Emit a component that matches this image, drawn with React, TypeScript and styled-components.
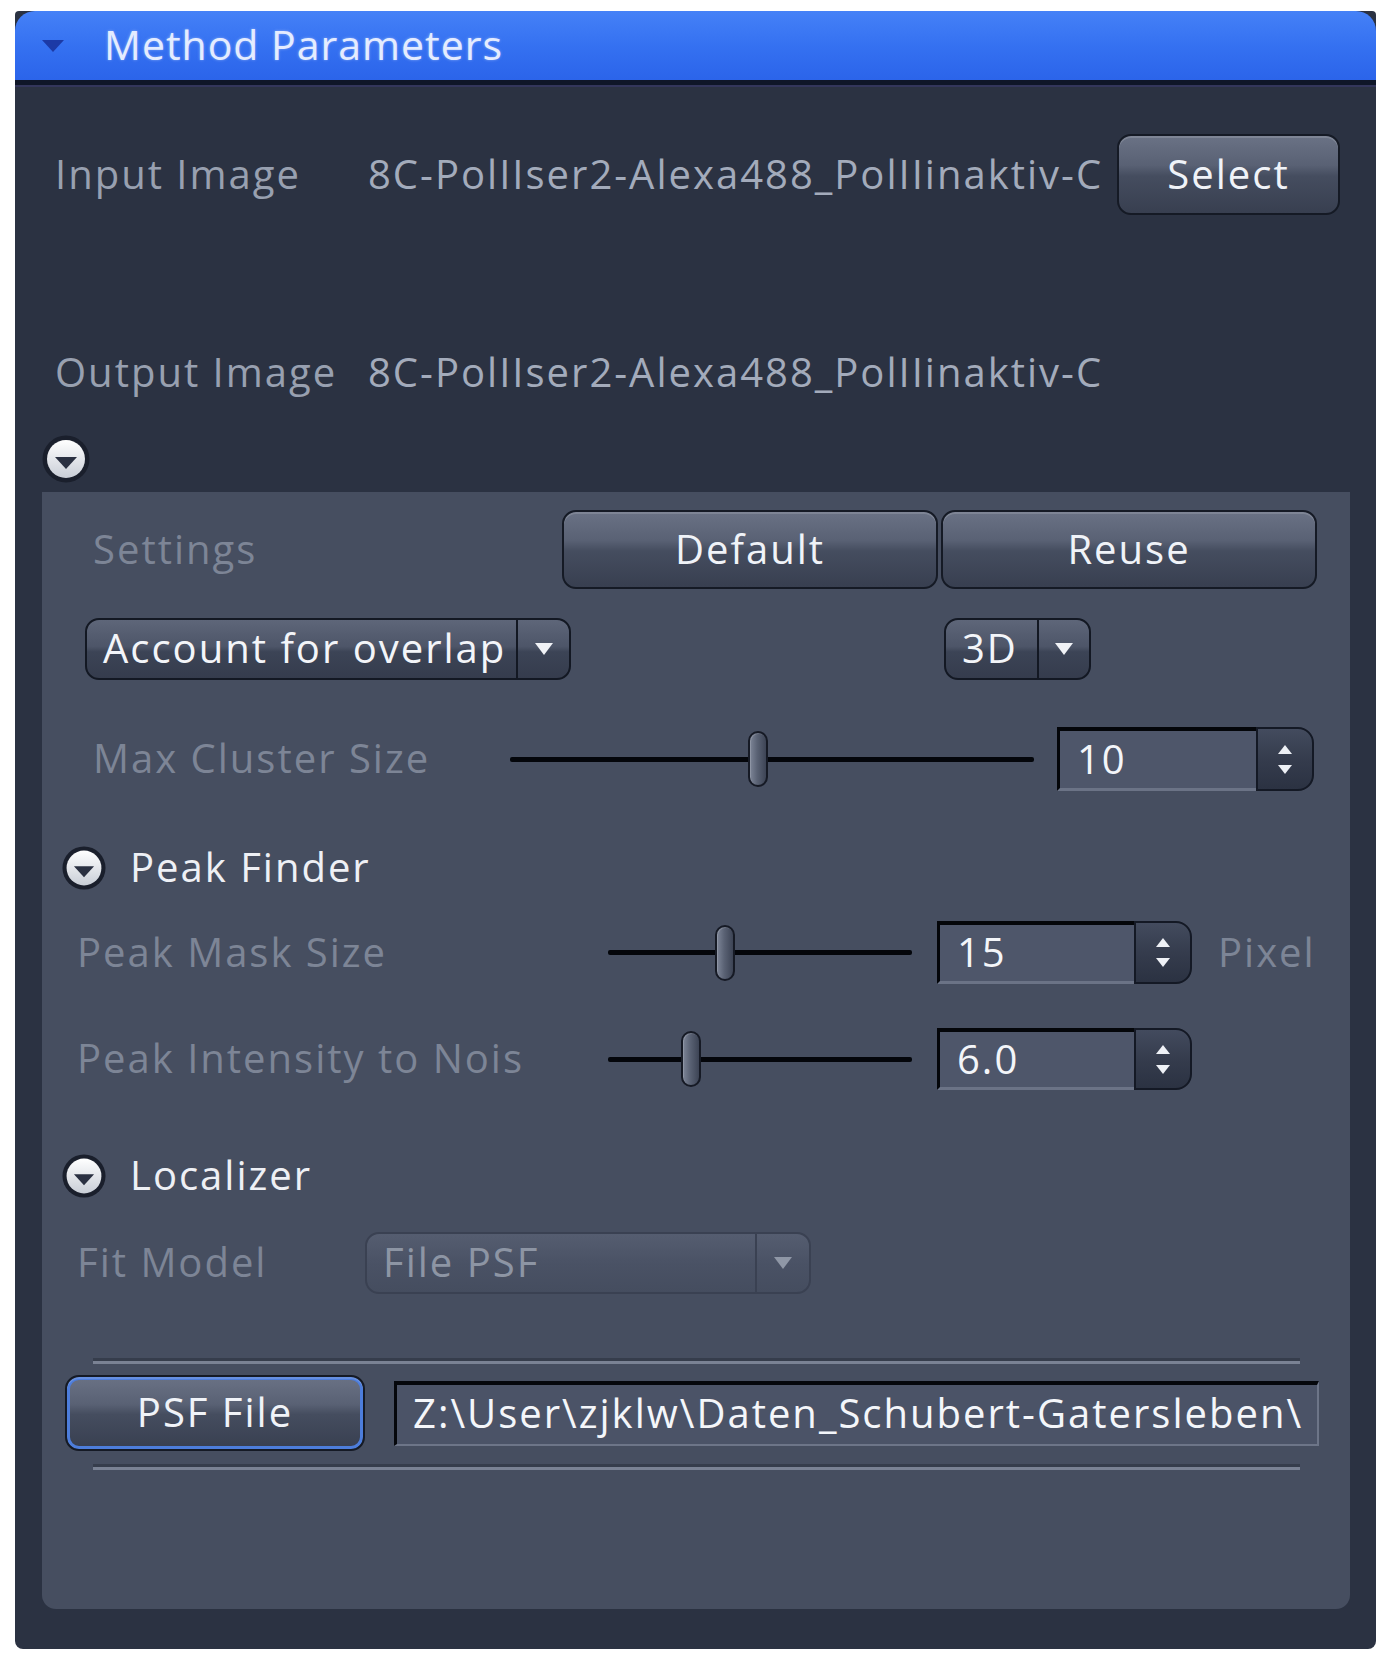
import React from "react";
import styled, { createGlobalStyle, css } from "styled-components";

const GlobalStyle = createGlobalStyle`
  html, body { margin: 0; padding: 0; background: #ffffff; }
  body { font-family: "Open Sans", "Liberation Sans", sans-serif; }
  * { box-sizing: border-box; }
`;

const uiText = css`
  font-size: 40px;
  font-weight: 500;
  letter-spacing: 2px;
  line-height: 1.35;
  padding-bottom: 2px;
  white-space: nowrap;
`;

const Page = styled.div`
  padding: 11px 0 8px 15px;
`;

const Panel = styled.section`
  width: 1361px;
  height: 1638px;
  background: #2b3242;
  display: flex;
  flex-direction: column;
  border-radius: 4px 4px 8px 8px;
  overflow: hidden;
`;

const Header = styled.header`
  flex: none;
  height: 74px;
  display: flex;
  align-items: center;
  padding-left: 27px;
  background: linear-gradient(180deg, #4581f7 0%, #3571f1 50%, #2b64ea 100%);
  border-radius: 20px 20px 0 0;
  border-bottom: 5px solid #0f1628;
  box-shadow: 0 2px 0 #33365b;
`;

const HeaderTitle = styled.h1`
  margin: 0 0 0 40px;
  padding-bottom: 2px;
  font-size: 41px;
  font-weight: 500;
  letter-spacing: 1px;
  line-height: 1.3;
  color: #e4ecff;
  text-shadow: 0 0 3px rgba(210, 225, 255, 0.5);
`;

const Row = styled.div<{ $mt: number; $h: number; $pl?: number; $pr?: number }>`
  flex: none;
  display: flex;
  align-items: center;
  margin-top: ${(p) => p.$mt}px;
  height: ${(p) => p.$h}px;
  padding-left: ${(p) => p.$pl ?? 0}px;
  padding-right: ${(p) => p.$pr ?? 0}px;
`;

const Label = styled.span<{ $w?: number; $tone?: "top" | "dim" | "value" }>`
  ${uiText};
  flex: none;
  width: ${(p) => (p.$w ? `${p.$w}px` : "auto")};
  overflow: ${(p) => (p.$tone === "value" ? "hidden" : "visible")};
  color: ${(p) =>
    p.$tone === "dim" ? "#7d8596" : p.$tone === "value" ? "#a3abbb" : "#98a0b0"};
`;

const GlossButton = styled.button<{ $w: number; $h: number; $focus?: boolean }>`
  ${uiText};
  flex: none;
  width: ${(p) => p.$w}px;
  height: ${(p) => p.$h}px;
  padding-top: 0;
  padding-left: 0;
  padding-right: 0;
  border: 2px solid #151a25;
  border-radius: 14px;
  background: linear-gradient(
    180deg,
    #6a7285 0%,
    #596174 38%,
    #454d5f 52%,
    #383f50 100%
  );
  box-shadow: inset 0 2px 0 rgba(255, 255, 255, 0.14)
    ${(p) => (p.$focus ? ", inset 0 0 0 3px #4d7ddb" : "")};
  color: #f0f3f8;
  font-family: inherit;
  display: flex;
  align-items: center;
  justify-content: center;
`;

const ToggleSpot = styled.div<{ $mt: number; $ml: number }>`
  flex: none;
  display: flex;
  margin-top: ${(p) => p.$mt}px;
  margin-left: ${(p) => p.$ml}px;
`;

const InnerPanel = styled.div`
  flex: 1;
  margin: 9px 26px 40px 27px;
  background: #464e60;
  border-radius: 0 0 14px 14px;
  display: flex;
  flex-direction: column;
`;

const Combo = styled.div<{ $w: number; $disabled?: boolean }>`
  flex: none;
  width: ${(p) => p.$w}px;
  height: 62px;
  display: flex;
  border: 2px solid ${(p) => (p.$disabled ? "#3a4152" : "#131823")};
  border-radius: 14px;
  overflow: hidden;
  background: ${(p) =>
    p.$disabled
      ? "linear-gradient(180deg, #555d70 0%, #4a5265 50%, #454d5f 100%)"
      : "linear-gradient(180deg, #5e6679 0%, #4d5568 46%, #3c4456 55%, #353c4d 100%)"};
`;

const ComboText = styled.span<{ $disabled?: boolean }>`
  ${uiText};
  flex: 1;
  display: flex;
  align-items: center;
  padding-left: 16px;
  color: ${(p) => (p.$disabled ? "#8d95a4" : "#f3f5f9")};
`;

const ComboArrow = styled.span<{ $w: number; $disabled?: boolean }>`
  flex: none;
  width: ${(p) => p.$w}px;
  display: flex;
  align-items: center;
  justify-content: center;
  border-left: 2px solid ${(p) => (p.$disabled ? "#3a4152" : "#131823")};
`;

const SliderTrack = styled.div<{ $w: number }>`
  flex: none;
  position: relative;
  width: ${(p) => p.$w}px;
  height: 5px;
  background: #04060b;
  border-radius: 2px;
`;

const SliderThumb = styled.div`
  position: absolute;
  top: 50%;
  width: 20px;
  height: 56px;
  transform: translate(-50%, -50%);
  border-radius: 10px;
  border: 2px solid #161a25;
  background: linear-gradient(90deg, #7d8597 0%, #5a6274 45%, #3d4455 100%);
  box-shadow: inset 1px 1px 0 rgba(255, 255, 255, 0.15);
`;

const Spin = styled.div<{ $w: number; $h: number; $ml: number }>`
  flex: none;
  display: flex;
  width: ${(p) => p.$w}px;
  height: ${(p) => p.$h}px;
  margin-left: ${(p) => p.$ml}px;
`;

const SpinField = styled.div`
  ${uiText};
  flex: 1;
  display: flex;
  align-items: center;
  padding-left: 17px;
  background: #4e566a;
  border-top: 4px solid #04060a;
  border-left: 3px solid #04060a;
  border-bottom: 3px solid #6b7386;
  color: #f3f5f9;
`;

const SpinButtons = styled.div`
  flex: none;
  width: 58px;
  display: flex;
  flex-direction: column;
  align-items: center;
  justify-content: center;
  gap: 11px;
  background: linear-gradient(180deg, #434b5e 0%, #353c4d 50%, #2b3242 100%);
  border: 2px solid #141925;
  border-radius: 0 16px 16px 0;
`;

const Unit = styled.span`
  ${uiText};
  margin-left: 26px;
  color: #7d8596;
`;

const SectionTitle = styled.span`
  ${uiText};
  margin-left: 24px;
  color: #eef0f5;
`;

const Separator = styled.div<{ $mt: number }>`
  flex: none;
  margin: ${(p) => p.$mt}px 50px 0 51px;
  height: 3px;
  background: #7a8294;
  box-shadow: 0 -3px 0 #363d4c;
`;

const PathField = styled.div`
  ${uiText};
  flex: none;
  width: 925px;
  height: 65px;
  margin-left: 29px;
  display: flex;
  align-items: center;
  padding-left: 16px;
  background: #4b5367;
  border-top: 4px solid #05070c;
  border-left: 3px solid #05070c;
  border-right: 2px solid #6d7588;
  border-bottom: 2px solid #6d7588;
  color: #f4f6fa;
  overflow: hidden;
`;

const Spacer = styled.div<{ $w: number }>`
  flex: none;
  width: ${(p) => p.$w}px;
`;

function HeaderTriangle() {
  return (
    <svg width="22" height="12" viewBox="0 0 22 12">
      <polygon points="0,0 22,0 11,12" fill="#1c3aa6" />
    </svg>
  );
}

function CircleToggle({ size }: { size: number }) {
  return (
    <svg width={size} height={size} viewBox="0 0 48 48">
      <defs>
        <linearGradient id="ctg" x1="0" y1="0" x2="0" y2="1">
          <stop offset="0" stopColor="#ffffff" />
          <stop offset="1" stopColor="#c9ced7" />
        </linearGradient>
      </defs>
      <circle cx="24" cy="24" r="23.5" fill="#1a1f2c" />
      <circle cx="24" cy="24" r="19" fill="url(#ctg)" />
      <polygon points="13,22 35,22 24,34" fill="#2a3041" />
    </svg>
  );
}

function DropArrow({ color }: { color: string }) {
  return (
    <svg width="18" height="12" viewBox="0 0 18 12">
      <polygon points="0,0 18,0 9,12" fill={color} />
    </svg>
  );
}

function SpinArrow({ up }: { up?: boolean }) {
  return (
    <svg width="14" height="9" viewBox="0 0 14 9">
      <polygon points={up ? "0,9 14,9 7,0" : "0,0 14,0 7,9"} fill="#eef1f6" />
    </svg>
  );
}

function Slider({ w, min, max, value }: { w: number; min: number; max: number; value: number }) {
  const pct = ((value - min) / (max - min)) * 100;
  return (
    <SliderTrack $w={w}>
      <SliderThumb style={{ left: `${pct}%` }} />
    </SliderTrack>
  );
}

function SpinBox({ w, h, ml, value }: { w: number; h: number; ml: number; value: string }) {
  return (
    <Spin $w={w} $h={h} $ml={ml}>
      <SpinField>{value}</SpinField>
      <SpinButtons>
        <SpinArrow up />
        <SpinArrow />
      </SpinButtons>
    </Spin>
  );
}

export default function App() {
  return (
    <>
      <GlobalStyle />
      <Page>
        <Panel>
          <Header>
            <HeaderTriangle />
            <HeaderTitle>Method Parameters</HeaderTitle>
          </Header>

          <Row $mt={49} $h={81} $pl={40}>
            <Label $w={313} $tone="top">Input Image</Label>
            <Label $w={738} $tone="value">8C-PolIIser2-Alexa488_PolIIinaktiv-C</Label>
            <Spacer $w={11} />
            <GlossButton $w={223} $h={81}>Select</GlossButton>
          </Row>

          <Row $mt={117} $h={81} $pl={40}>
            <Label $w={313} $tone="top">Output Image</Label>
            <Label $w={738} $tone="value">8C-PolIIser2-Alexa488_PolIIinaktiv-C</Label>
          </Row>

          <ToggleSpot $mt={22} $ml={27}>
            <CircleToggle size={48} />
          </ToggleSpot>

          <InnerPanel>
            <Row $mt={18} $h={79} $pl={51} $pr={33}>
              <Label $w={469} $tone="dim">Settings</Label>
              <GlossButton $w={376} $h={79}>Default</GlossButton>
              <Spacer $w={3} />
              <GlossButton $w={376} $h={79}>Reuse</GlossButton>
            </Row>

            <Row $mt={29} $h={62} $pl={43}>
              <Combo $w={486}>
                <ComboText>Account for overlap</ComboText>
                <ComboArrow $w={53}>
                  <DropArrow color="#f0f2f6" />
                </ComboArrow>
              </Combo>
              <Spacer $w={373} />
              <Combo $w={147}>
                <ComboText>3D</ComboText>
                <ComboArrow $w={52}>
                  <DropArrow color="#f0f2f6" />
                </ComboArrow>
              </Combo>
            </Row>

            <Row $mt={47} $h={64} $pl={51}>
              <Label $w={417} $tone="dim">Max Cluster Size</Label>
              <Slider w={524} min={1} max={20} value={10} />
              <SpinBox w={257} h={64} ml={23} value="10" />
            </Row>

            <Row $mt={55} $h={44} $pl={20}>
              <CircleToggle size={44} />
              <SectionTitle>Peak Finder</SectionTitle>
            </Row>

            <Row $mt={31} $h={63} $pl={35}>
              <Label $w={531} $tone="dim">Peak Mask Size</Label>
              <Slider w={304} min={5} max={31} value={15} />
              <SpinBox w={255} h={63} ml={25} value="15" />
              <Unit>Pixel</Unit>
            </Row>

            <Row $mt={44} $h={62} $pl={35}>
              <Label $w={531} $tone="dim">Peak Intensity to Nois</Label>
              <Slider w={304} min={4.5} max={10} value={6} />
              <SpinBox w={255} h={62} ml={25} value="6.0" />
            </Row>

            <Row $mt={64} $h={44} $pl={20}>
              <CircleToggle size={44} />
              <SectionTitle>Localizer</SectionTitle>
            </Row>

            <Row $mt={34} $h={62} $pl={35}>
              <Label $w={288} $tone="dim">Fit Model</Label>
              <Combo $w={446} $disabled>
                <ComboText $disabled>File PSF</ComboText>
                <ComboArrow $w={54} $disabled>
                  <DropArrow color="#8f97a6" />
                </ComboArrow>
              </Combo>
            </Row>

            <Separator $mt={67} />

            <Row $mt={11} $h={76} $pl={23}>
              <GlossButton $w={300} $h={76} $focus>PSF File</GlossButton>
              <PathField>Z:\User\zjklw\Daten_Schubert-Gatersleben\</PathField>
            </Row>

            <Separator $mt={16} />
          </InnerPanel>
        </Panel>
      </Page>
    </>
  );
}
